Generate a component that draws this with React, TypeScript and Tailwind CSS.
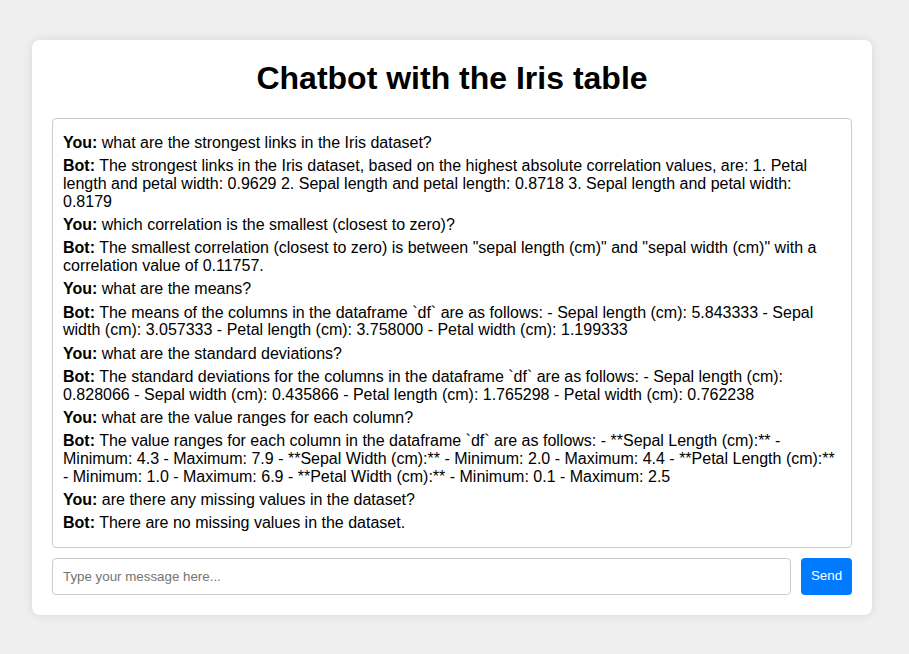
import { useState } from "react";

const messages = [
    { from: "You", text: "what are the strongest links in the Iris dataset?" },
    {
        from: "Bot",
        text: "The strongest links in the Iris dataset, based on the highest absolute correlation values, are: 1. Petal length and petal width: 0.9629 2. Sepal length and petal length: 0.8718 3. Sepal length and petal width: 0.8179",
    },
    { from: "You", text: "which correlation is the smallest (closest to zero)?" },
    {
        from: "Bot",
        text: 'The smallest correlation (closest to zero) is between "sepal length (cm)" and "sepal width (cm)" with a correlation value of 0.11757.',
    },
    { from: "You", text: "what are the means?" },
    {
        from: "Bot",
        text: "The means of the columns in the dataframe `df` are as follows: - Sepal length (cm): 5.843333 - Sepal width (cm): 3.057333 - Petal length (cm): 3.758000 - Petal width (cm): 1.199333",
    },
    { from: "You", text: "what are the standard deviations?" },
    {
        from: "Bot",
        text: "The standard deviations for the columns in the dataframe `df` are as follows: - Sepal length (cm): 0.828066 - Sepal width (cm): 0.435866 - Petal length (cm): 1.765298 - Petal width (cm): 0.762238",
    },
    { from: "You", text: "what are the value ranges for each column?" },
    {
        from: "Bot",
        text: "The value ranges for each column in the dataframe `df` are as follows: - **Sepal Length (cm):** - Minimum: 4.3 - Maximum: 7.9 - **Sepal Width (cm):** - Minimum: 2.0 - Maximum: 4.4 - **Petal Length (cm):** - Minimum: 1.0 - Maximum: 6.9 - **Petal Width (cm):** - Minimum: 0.1 - Maximum: 2.5",
    },
    { from: "You", text: "are there any missing values in the dataset?" },
    { from: "Bot", text: "There are no missing values in the dataset." },
];

export default function App() {
    const [draft, setDraft] = useState("");

    return (
        <div className="min-h-screen bg-[#efefef] pt-[40px] pb-[40px] font-['Liberation_Sans',Arial,sans-serif] text-black">
            <div className="ml-[32px] w-[840px] rounded-[8px] bg-white p-[20px] shadow-[0_0_10px_rgba(0,0,0,0.1)]">
                <h1 className="mb-[21px] text-center text-[32px] leading-[37px] font-bold">
                    Chatbot with the Iris table
                </h1>

                {/* Chat log */}
                <div className="flex flex-col gap-[5.6px] rounded-[4px] border border-[#ccc] px-[10px] py-[15px]">
                    {messages.map((m, i) => (
                        <p key={i} className="text-[16px] leading-[17.7px]">
                            <strong className="font-bold">{m.from}:</strong> {m.text}
                        </p>
                    ))}
                </div>

                {/* Input row */}
                <div className="mt-[10px] flex gap-[10px]">
                    <input
                        type="text"
                        placeholder="Type your message here..."
                        value={draft}
                        onChange={(e) => setDraft(e.target.value)}
                        className="h-[37px] flex-1 rounded-[4px] border border-[#ccc] px-[10px] text-[13.33px] outline-none placeholder:text-[#757575]"
                    />
                    <button className="h-[37px] w-[51px] rounded-[4px] bg-[#007bff] text-[13.33px] text-white">
                        Send
                    </button>
                </div>
            </div>
        </div>
    );
}
